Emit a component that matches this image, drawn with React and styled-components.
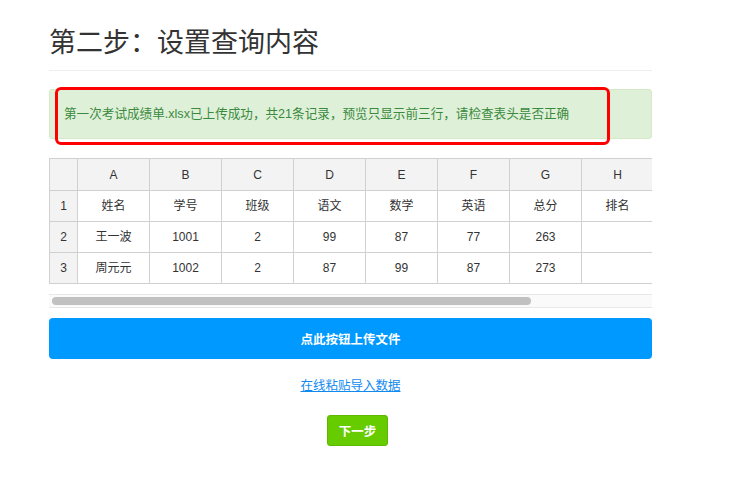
import React from "react";
import styled, { createGlobalStyle } from "styled-components";

const Global = createGlobalStyle`
  html, body { margin: 0; padding: 0; background: #fff; }
  body { font-family: "Liberation Sans", "Noto Sans CJK SC", sans-serif; color: #333; }
`;

const Page = styled.div`
  width: 603px;
  margin-left: 49px;
  padding-top: 28px;
`;

const Title = styled.h1`
  margin: 0;
  font-size: 27px;
  line-height: 30px;
  font-weight: normal;
  color: #333;
  padding-bottom: 12px;
  border-bottom: 1px solid #eee;
`;

const AlertWrap = styled.div`
  position: relative;
  margin-top: 18px;
`;

const Alert = styled.div`
  background: #dff0d8;
  border: 1px solid #d6e9c6;
  border-radius: 3px;
  padding: 15px 14px;
  font-size: 12.6px;
  line-height: 18px;
  color: #3a8a3e;
`;

const Highlight = styled.div`
  position: absolute;
  left: 6px;
  top: -2px;
  width: 555px;
  height: 58px;
  box-sizing: border-box;
  border: 3px solid #f00;
  border-radius: 6px;
  pointer-events: none;
`;

const TableViewport = styled.div`
  margin-top: 19px;
  overflow: hidden;
`;

const Table = styled.table`
  border-collapse: collapse;
  table-layout: fixed;
  width: 605px;
  font-size: 12px;
  color: #333;
`;

const Cell = styled.td`
  border: 1px solid #d0d0d0;
  padding: 0;
  height: ${(p) => (p.$tall ? 31 : 30)}px;
  line-height: 16px;
  text-align: center;
  background: ${(p) => (p.$head ? "#f3f3f3" : "#fff")};
`;

const ScrollTrack = styled.div`
  margin-top: 10px;
  height: 12px;
  padding: 0 3px;
  display: flex;
  align-items: center;
  background: #fafafa;
  border-top: 1px solid #e8e8e8;
  border-bottom: 1px solid #e8e8e8;
`;

const ScrollThumb = styled.div`
  height: 8px;
  border-radius: 4px;
  background: #c1c1c1;
`;

const UploadButton = styled.button`
  display: block;
  width: 100%;
  height: 41px;
  margin-top: 10px;
  border: none;
  border-radius: 4px;
  background: #0099ff;
  color: #fff;
  font-family: inherit;
  font-size: 12.5px;
  font-weight: bold;
  cursor: pointer;
`;

const LinkRow = styled.div`
  margin-top: 17px;
  text-align: center;
  line-height: 18px;
`;

const PasteLink = styled.a`
  font-size: 12.5px;
  color: #118af0;
  text-decoration: underline;
  cursor: pointer;
`;

const NextRow = styled.div`
  display: flex;
  justify-content: center;
  margin-top: 20px;
`;

const NextButton = styled.button`
  margin-left: 14px;
  width: 61px;
  height: 31px;
  border: 1px solid #5cb800;
  border-radius: 3px;
  background: #66cc00;
  color: #fff;
  font-family: inherit;
  font-size: 12.5px;
  font-weight: bold;
  cursor: pointer;
`;

const letters = ["A", "B", "C", "D", "E", "F", "G", "H"];
const rows = [
  ["姓名", "学号", "班级", "语文", "数学", "英语", "总分", "排名"],
  ["王一波", "1001", "2", "99", "87", "77", "263", ""],
  ["周元元", "1002", "2", "87", "99", "87", "273", ""],
];

const thumbWidth = 479;

export default function App() {
  return (
    <>
      <Global />
      <Page>
        <Title>第二步：设置查询内容</Title>
        <AlertWrap>
          <Alert>第一次考试成绩单.xlsx已上传成功，共21条记录，预览只显示前三行，请检查表头是否正确</Alert>
          <Highlight />
        </AlertWrap>
        <TableViewport>
          <Table>
            <colgroup>
              <col style={{ width: 28 }} />
              {letters.map((l) => (
                <col key={l} style={{ width: 72 }} />
              ))}
            </colgroup>
            <tbody>
              <tr>
                <Cell $head $tall />
                {letters.map((l) => (
                  <Cell $head $tall key={l}>{l}</Cell>
                ))}
              </tr>
              {rows.map((r, i) => (
                <tr key={i}>
                  <Cell $head>{i + 1}</Cell>
                  {r.map((v, j) => (
                    <Cell key={j}>{v}</Cell>
                  ))}
                </tr>
              ))}
            </tbody>
          </Table>
        </TableViewport>
        <ScrollTrack>
          <ScrollThumb style={{ width: thumbWidth }} />
        </ScrollTrack>
        <UploadButton>点此按钮上传文件</UploadButton>
        <LinkRow>
          <PasteLink>在线粘贴导入数据</PasteLink>
        </LinkRow>
        <NextRow>
          <NextButton>下一步</NextButton>
        </NextRow>
      </Page>
    </>
  );
}
